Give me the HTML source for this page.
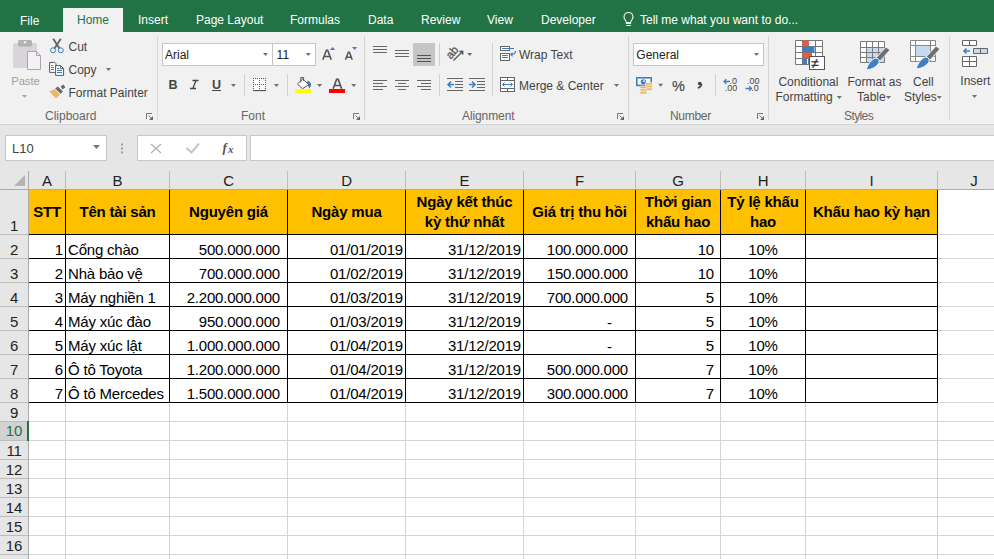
<!DOCTYPE html><html><head><meta charset="utf-8"><style>
*{margin:0;padding:0;box-sizing:border-box}
body{width:994px;height:559px;overflow:hidden;position:relative;background:#fff;font-family:"Liberation Sans",sans-serif}
.abs{position:absolute}
.t{position:absolute;white-space:nowrap;line-height:1}
.tab{position:absolute;top:14.8px;color:#fff;font-size:12px;line-height:12px;white-space:nowrap}
.rb{position:absolute;color:#444;font-size:12.5px;line-height:15px;white-space:nowrap}
.gl{position:absolute;top:110px;color:#666;font-size:12px;line-height:12px;white-space:nowrap}
.sep{position:absolute;width:1px;background:#d5d5d5}
.c{position:absolute;font-size:15px;letter-spacing:-0.2px;line-height:17px;white-space:nowrap;color:#000}
</style></head><body>

<div class="abs" style="left:0;top:0;width:994px;height:32px;background:#217346"></div>
<div class="abs" style="left:63px;top:8px;width:60px;height:24px;background:#f1f1f1"></div>
<div class="tab" style="left:20px;color:#fff;top:14.8px;">File</div>
<div class="tab" style="left:77px;color:#217346;top:13.9px;">Home</div>
<div class="tab" style="left:138px;color:#fff;top:13.9px;">Insert</div>
<div class="tab" style="left:196px;color:#fff;top:13.9px;">Page Layout</div>
<div class="tab" style="left:290px;color:#fff;top:13.9px;">Formulas</div>
<div class="tab" style="left:368px;color:#fff;top:13.9px;">Data</div>
<div class="tab" style="left:421px;color:#fff;top:13.9px;">Review</div>
<div class="tab" style="left:487px;color:#fff;top:13.9px;">View</div>
<div class="tab" style="left:541px;color:#fff;top:13.9px;">Developer</div>
<div class="tab" style="left:640px;color:#fff;top:13.9px;">Tell me what you want to do...</div>
<svg class="abs" style="left:0;top:0" width="994" height="32"><path d="M626.2,22.2 C626.2,20.3 624,19.5 624,16.9 A4.5,4.5 0 0 1 633,16.9 C633,19.5 630.8,20.3 630.8,22.2" fill="none" stroke="#fff" stroke-width="1.05"/><rect x="625.9" y="22" width="5.2" height="2" fill="#fff"/><rect x="626.3" y="25" width="4.4" height="1" fill="#fff"/></svg>
<div class="abs" style="left:0;top:32px;width:994px;height:92px;background:#f1f1f1"></div>
<div class="abs" style="left:0;top:124px;width:994px;height:1px;background:#d4d4d4"></div>
<div class="abs" style="left:0;top:125px;width:994px;height:65px;background:#e6e6e6"></div>
<div class="sep" style="left:157px;top:36px;height:84px"></div>
<div class="sep" style="left:364px;top:36px;height:84px"></div>
<div class="sep" style="left:628px;top:36px;height:84px"></div>
<div class="sep" style="left:768px;top:36px;height:84px"></div>
<div class="sep" style="left:949px;top:36px;height:84px"></div>
<div class="gl" style="left:45px;letter-spacing:0px">Clipboard</div>
<div class="gl" style="left:241px;letter-spacing:0px">Font</div>
<div class="gl" style="left:462px;letter-spacing:-0.1px">Alignment</div>
<div class="gl" style="left:670px;letter-spacing:-0.3px">Number</div>
<div class="gl" style="left:844px;letter-spacing:-0.6px">Styles</div>
<div class="rb" style="left:68.5px;top:40.8px;font-size:12px;line-height:12px;color:#444;">Cut</div>
<div class="rb" style="left:68.5px;top:64.2px;font-size:12px;line-height:12px;color:#444;">Copy</div>
<div class="rb" style="left:68.5px;top:87.0px;font-size:12px;line-height:12px;color:#444;">Format Painter</div>
<div class="rb" style="left:11.2px;top:75.5px;font-size:11.2px;line-height:11.2px;color:#a0a0a0;">Paste</div>
<div class="rb" style="left:519px;top:48.8px;font-size:12px;line-height:12px;color:#444;">Wrap Text</div>
<div class="rb" style="left:519px;top:80.2px;font-size:12px;line-height:12px;color:#444;">Merge &amp; Center</div>
<div class="rb" style="left:778.4px;top:75.8px;font-size:12px;line-height:12px;color:#444;">Conditional</div>
<div class="rb" style="left:775.4px;top:91.4px;font-size:12px;line-height:12px;color:#444;">Formatting</div>
<div class="rb" style="left:847.5px;top:75.8px;font-size:12px;line-height:12px;color:#444;">Format as</div>
<div class="rb" style="left:857px;top:91.4px;font-size:12px;line-height:12px;color:#444;">Table</div>
<div class="rb" style="left:913px;top:75.8px;font-size:12px;line-height:12px;color:#444;">Cell</div>
<div class="rb" style="left:904px;top:91.4px;font-size:12px;line-height:12px;color:#444;">Styles</div>
<div class="rb" style="left:960.3px;top:74.8px;font-size:12px;line-height:12px;color:#444;">Insert</div>
<div class="abs" style="left:162px;top:43px;width:111px;height:23px;background:#fff;border:1px solid #c6c6c6"></div>
<div class="abs" style="left:272px;top:43px;width:44px;height:23px;background:#fff;border:1px solid #c6c6c6"></div>
<div class="abs" style="left:633px;top:43px;width:131px;height:23px;background:#fff;border:1px solid #c6c6c6"></div>
<div class="abs" style="left:413px;top:43px;width:22px;height:23px;background:#c5c5c5"></div>
<div class="rb" style="left:165px;top:48.8px;font-size:12px;line-height:12px;color:#222;">Arial</div>
<div class="rb" style="left:276.6px;top:48.8px;font-size:12px;line-height:12px;color:#222;">11</div>
<div class="rb" style="left:636.3px;top:48.8px;font-size:12px;line-height:12px;color:#222;">General</div>
<svg class="abs" style="left:0;top:0" width="994" height="125"><rect x="13" y="43" width="24" height="25" rx="2" fill="#d9d4d9"/><rect x="18" y="40" width="14" height="6.5" rx="1.5" fill="#b4b1b4"/><circle cx="25" cy="42.2" r="1.2" fill="#f1f1f1"/><path d="M27.5,51.5 H36.5 L40.5,55.5 V69.5 H27.5 Z" fill="#f5f0f5" stroke="#a9a6a9" stroke-width="1"/><path d="M36.5,51.5 V55.5 H40.5" fill="none" stroke="#a9a6a9" stroke-width="1"/><polygon points="22.0,95.0 27.0,95.0 24.5,98.0" fill="#a6a6a6"/><path d="M53.2,38.8 L59.5,48.5 M60.8,38.8 L54.5,48.5" stroke="#666" stroke-width="1.9" fill="none"/><circle cx="53" cy="50.3" r="2.5" fill="none" stroke="#3f7fc1" stroke-width="1.0"/><circle cx="60.8" cy="50.3" r="2.5" fill="none" stroke="#3f7fc1" stroke-width="1.0"/><path d="M49.6,62.4 H54.6 L56,63.8 V72.4 H49.6 Z" fill="#fff" stroke="#5a5a5a"/><path d="M51,65.5 H53 M51,67.5 H54 M51,69.5 H54" stroke="#3f7fc1"/><path d="M55.6,65.6 H60.6 L63.6,68.6 V75.4 H55.6 Z" fill="#fff" stroke="#5a5a5a"/><path d="M60.6,65.6 V68.6 H63.6" fill="none" stroke="#5a5a5a"/><path d="M57,68.5 H59 M57,70.5 H62 M57,72.5 H62" stroke="#3f7fc1"/><polygon points="106.0,68.0 111.0,68.0 108.5,71.0" fill="#6f6f6f"/><path d="M49.2,91.4 L54.8,89 L60,94.6 L56,98.6 Z" fill="#e8b76e"/><path d="M55.2,88.4 L57.8,86.4 L63,91.6 L60.6,93.8 Z" fill="#6a6a6a"/><path d="M60.6,86.4 L63.4,84.6 L65.4,87.2 L62.6,89.6 Z" fill="#6a6a6a"/><path d="M146.5,119 V113.5 H152" fill="none" stroke="#777"/><path d="M148.5,115.5 L152,119" fill="none" stroke="#777"/><polygon points="153,116 153,120 149,120" fill="#666"/><path d="M353.5,119 V113.5 H359" fill="none" stroke="#777"/><path d="M355.5,115.5 L359,119" fill="none" stroke="#777"/><polygon points="360,116 360,120 356,120" fill="#666"/><path d="M617.5,119 V113.5 H623" fill="none" stroke="#777"/><path d="M619.5,115.5 L623,119" fill="none" stroke="#777"/><polygon points="624,116 624,120 620,120" fill="#666"/><path d="M757.5,119 V113.5 H763" fill="none" stroke="#777"/><path d="M759.5,115.5 L763,119" fill="none" stroke="#777"/><polygon points="764,116 764,120 760,120" fill="#666"/><polygon points="263.0,53.0 268.0,53.0 265.5,56.0" fill="#6f6f6f"/><polygon points="305.7,53.0 310.7,53.0 308.2,56.0" fill="#6f6f6f"/><path d="M322.8,59.7 L326.4,50.3 H327.7 L331.2,59.7 M324.3,56.5 H329.8" fill="none" stroke="#555" stroke-width="1.6"/><polygon points="330,50 335.2,50 332.6,47" fill="#3f7fc1"/><path d="M345.5,59.7 L348.3,52.2 H349.5 L352.2,59.7 M346.7,57.2 H351" fill="none" stroke="#555" stroke-width="1.5"/><polygon points="352,47 357.2,47 354.6,50" fill="#3f7fc1"/><text x="168.5" y="89" font-family="Liberation Sans" font-weight="bold" font-size="12.5" fill="#444">B</text><path d="M192.5,80.5 H198.5 M190,88.5 H196 M196,80.5 L192.8,88.5" stroke="#444" stroke-width="1.3" fill="none"/><text x="212" y="88.5" font-family="Liberation Sans" font-weight="bold" font-size="12.5" fill="#444">U</text><rect x="212" y="90" width="9" height="1" fill="#444"/><polygon points="230.9,84.0 235.9,84.0 233.4,87.0" fill="#6f6f6f"/><rect x="244" y="74" width="1" height="22" fill="#d0d0d0"/><rect x="253" y="78" width="13" height="12" fill="#fff"/><rect x="253" y="78" width="1" height="1" fill="#555"/><rect x="255" y="78" width="1" height="1" fill="#555"/><rect x="257" y="78" width="1" height="1" fill="#555"/><rect x="259" y="78" width="1" height="1" fill="#555"/><rect x="261" y="78" width="1" height="1" fill="#555"/><rect x="263" y="78" width="1" height="1" fill="#555"/><rect x="265" y="78" width="1" height="1" fill="#555"/><rect x="253" y="84" width="1" height="1" fill="#555"/><rect x="255" y="84" width="1" height="1" fill="#555"/><rect x="257" y="84" width="1" height="1" fill="#555"/><rect x="259" y="84" width="1" height="1" fill="#555"/><rect x="261" y="84" width="1" height="1" fill="#555"/><rect x="263" y="84" width="1" height="1" fill="#555"/><rect x="265" y="84" width="1" height="1" fill="#555"/><rect x="253" y="78" width="1" height="1" fill="#555"/><rect x="253" y="80" width="1" height="1" fill="#555"/><rect x="253" y="82" width="1" height="1" fill="#555"/><rect x="253" y="84" width="1" height="1" fill="#555"/><rect x="253" y="86" width="1" height="1" fill="#555"/><rect x="253" y="88" width="1" height="1" fill="#555"/><rect x="259" y="78" width="1" height="1" fill="#555"/><rect x="259" y="80" width="1" height="1" fill="#555"/><rect x="259" y="82" width="1" height="1" fill="#555"/><rect x="259" y="84" width="1" height="1" fill="#555"/><rect x="259" y="86" width="1" height="1" fill="#555"/><rect x="259" y="88" width="1" height="1" fill="#555"/><rect x="265" y="78" width="1" height="1" fill="#555"/><rect x="265" y="80" width="1" height="1" fill="#555"/><rect x="265" y="82" width="1" height="1" fill="#555"/><rect x="265" y="84" width="1" height="1" fill="#555"/><rect x="265" y="86" width="1" height="1" fill="#555"/><rect x="265" y="88" width="1" height="1" fill="#555"/><rect x="253" y="90" width="13" height="1.1" fill="#555"/><polygon points="273.9,84.0 278.9,84.0 276.4,87.0" fill="#6f6f6f"/><rect x="287" y="74" width="1" height="22" fill="#d0d0d0"/><path d="M307.5,80.5 Q311.8,82 311,86 L309.2,88.6 Q308.6,85.5 307,84.5 Z" fill="#3f7fc1"/><polygon points="297.5,84 302.7,79 308.8,84.5 302.5,88.8" fill="#fff" stroke="#555" stroke-width="1"/><path d="M300.8,82.5 V77.6 H303.6 V81" fill="none" stroke="#555" stroke-width="1"/><rect x="295" y="89" width="16" height="4" fill="#ffff00"/><polygon points="317.1,84.0 322.1,84.0 319.6,87.0" fill="#6f6f6f"/><path d="M333.2,88.8 L336.6,79.3 H338.2 L341.6,88.8 M334.6,85.5 H340.2" fill="none" stroke="#555" stroke-width="1.7"/><rect x="329" y="89" width="16" height="4" fill="#ff0000"/><polygon points="351.2,84.0 356.2,84.0 353.7,87.0" fill="#6f6f6f"/><rect x="373" y="46" width="14" height="1" fill="#666"/><rect x="373" y="49" width="14" height="1" fill="#666"/><rect x="373" y="52" width="14" height="1" fill="#666"/><rect x="395" y="50" width="14" height="1" fill="#666"/><rect x="395" y="53" width="14" height="1" fill="#666"/><rect x="395" y="56" width="14" height="1" fill="#666"/><rect x="417" y="55" width="14" height="1" fill="#555"/><rect x="417" y="58" width="14" height="1" fill="#555"/><rect x="417" y="61" width="14" height="1" fill="#555"/><rect x="439" y="43" width="1" height="23" fill="#d0d0d0"/><rect x="373" y="80" width="14" height="1" fill="#666"/><rect x="395.0" y="80" width="14.0" height="1" fill="#666"/><rect x="417" y="80" width="14" height="1" fill="#666"/><rect x="373" y="83" width="10" height="1" fill="#666"/><rect x="398.0" y="83" width="8.0" height="1" fill="#666"/><rect x="421" y="83" width="10" height="1" fill="#666"/><rect x="373" y="86" width="14" height="1" fill="#666"/><rect x="395.0" y="86" width="14.0" height="1" fill="#666"/><rect x="417" y="86" width="14" height="1" fill="#666"/><rect x="373" y="89" width="10" height="1" fill="#666"/><rect x="398.0" y="89" width="8.0" height="1" fill="#666"/><rect x="421" y="89" width="10" height="1" fill="#666"/><rect x="439" y="74" width="1" height="22" fill="#d0d0d0"/><text x="0" y="0" font-family="Liberation Sans" font-size="11.5" fill="#555" stroke="#555" stroke-width="0.3" transform="translate(451,59.8) rotate(-50)">ab</text><path d="M453.5,60.5 L461.5,52.5" fill="none" stroke="#555" stroke-width="1.3"/><polygon points="459.5,51 463,51 463,54.5" fill="#555" stroke="#555" stroke-width="0.8"/><polygon points="467.2,53.0 472.2,53.0 469.7,56.0" fill="#6f6f6f"/><rect x="447" y="78" width="16" height="1" fill="#666"/><rect x="447" y="90" width="16" height="1" fill="#666"/><rect x="455" y="81" width="8" height="1" fill="#666"/><rect x="455" y="84" width="8" height="1" fill="#666"/><rect x="455" y="87" width="8" height="1" fill="#666"/><path d="M454,84.5 H448 M451,81.5 L448,84.5 L451,87.5" stroke="#3f7fc1" stroke-width="1.6" fill="none"/><rect x="469" y="78" width="16" height="1" fill="#666"/><rect x="469" y="90" width="16" height="1" fill="#666"/><rect x="477" y="81" width="8" height="1" fill="#666"/><rect x="477" y="84" width="8" height="1" fill="#666"/><rect x="477" y="87" width="8" height="1" fill="#666"/><path d="M469,84.5 H475 M472,81.5 L475,84.5 L472,87.5" stroke="#3f7fc1" stroke-width="1.6" fill="none"/><rect x="492" y="43" width="1" height="53" fill="#d0d0d0"/><rect x="500.5" y="46.5" width="9" height="4" fill="#fff" stroke="#666"/><rect x="500.5" y="53.5" width="9" height="7" fill="#fff" stroke="#666"/><path d="M502,48.5 H514 M502,55.5 H508 M502,57.5 H508" stroke="#3f7fc1"/><path d="M515.5,51 Q515.5,54.5 511,54.5" fill="none" stroke="#3f7fc1" stroke-width="1.2"/><polygon points="510,54.5 512.5,52 512.5,57" fill="#3f7fc1"/><rect x="500.5" y="77.5" width="14" height="14" fill="#fff" stroke="#666"/><path d="M500.5,80.5 H514.5 M500.5,88.5 H514.5 M507.5,77.5 V80.5 M507.5,88.5 V91.5" stroke="#666"/><path d="M502.5,84.5 H512.5 M504.5,82.5 L502.5,84.5 L504.5,86.5 M510.5,82.5 L512.5,84.5 L510.5,86.5" stroke="#3f7fc1" fill="none"/><polygon points="614.0,84.0 619.0,84.0 616.5,87.0" fill="#6f6f6f"/><polygon points="754.0,53.0 759.0,53.0 756.5,56.0" fill="#6f6f6f"/><rect x="636" y="77" width="16" height="9.2" fill="#3f7fc1"/><rect x="637.6" y="78.6" width="12.8" height="6" fill="#fff"/><circle cx="643.4" cy="81.8" r="2.6" fill="#3f7fc1"/><circle cx="644" cy="81.2" r="0.9" fill="#fff"/><rect x="645.1999999999999" y="82.7" width="7.2" height="2.6" rx="1.3" fill="#e8b76e" stroke="#f1f1f1" stroke-width="0.7"/><rect x="645.1999999999999" y="85.3" width="7.2" height="2.6" rx="1.3" fill="#e8b76e" stroke="#f1f1f1" stroke-width="0.7"/><rect x="645.1999999999999" y="87.9" width="7.2" height="2.6" rx="1.3" fill="#e8b76e" stroke="#f1f1f1" stroke-width="0.7"/><rect x="639.8" y="86.10000000000001" width="7.2" height="2.6" rx="1.3" fill="#e8b76e" stroke="#f1f1f1" stroke-width="0.7"/><rect x="639.8" y="88.7" width="7.2" height="2.6" rx="1.3" fill="#e8b76e" stroke="#f1f1f1" stroke-width="0.7"/><rect x="639.8" y="91.3" width="7.2" height="2.6" rx="1.3" fill="#e8b76e" stroke="#f1f1f1" stroke-width="0.7"/><polygon points="658.1,83.7 663.1,83.7 660.6,86.7" fill="#6f6f6f"/><text x="672" y="91" font-family="Liberation Sans" font-size="14.5" fill="#444" stroke="#444" stroke-width="0.15">%</text><circle cx="699.8" cy="83.6" r="1.9" fill="#444"/><path d="M701.5,84 Q701.8,86.6 697.8,88" fill="none" stroke="#444" stroke-width="1.5"/><rect x="715" y="74" width="1" height="22" fill="#d0d0d0"/><text x="729.5" y="84" font-family="Liberation Sans" font-size="9" fill="#444">.0</text><text x="724.8" y="91" font-family="Liberation Sans" font-size="9" fill="#444">.00</text><path d="M730,81.5 H724 M726.3,79.2 L724,81.5 L726.3,83.8" stroke="#3f7fc1" stroke-width="1.3" fill="none"/><text x="747" y="84" font-family="Liberation Sans" font-size="9" fill="#444">.00</text><text x="751.3" y="91" font-family="Liberation Sans" font-size="9" fill="#444">.0</text><path d="M745.5,88.5 H751.5 M749.2,86.2 L751.5,88.5 L749.2,90.8" stroke="#3f7fc1" stroke-width="1.3" fill="none"/><rect x="795.5" y="40.5" width="27" height="24" fill="#fff"/><path d="M795.5,40.5 V64.5" stroke="#777"/><path d="M802.5,40.5 V64.5" stroke="#777"/><path d="M808.5,40.5 V64.5" stroke="#777"/><path d="M815.5,40.5 V64.5" stroke="#777"/><path d="M822.5,40.5 V64.5" stroke="#777"/><path d="M795.5,40.5 H822.5" stroke="#777"/><path d="M795.5,46.5 H822.5" stroke="#777"/><path d="M795.5,52.5 H822.5" stroke="#777"/><path d="M795.5,58.5 H822.5" stroke="#777"/><path d="M795.5,64.5 H822.5" stroke="#777"/><rect x="802.5" y="40.5" width="6.5" height="6" fill="#e0603c"/><rect x="802.5" y="46.5" width="12" height="6" fill="#3f7fc1"/><rect x="802.5" y="52.5" width="9.5" height="6" fill="#e0603c"/><rect x="802.5" y="58.5" width="4.5" height="6" fill="#3f7fc1"/><rect x="809.5" y="56.5" width="15" height="13" fill="#fff" stroke="#555"/><text x="811.3" y="67.5" font-family="Liberation Sans" font-size="13.5" fill="#333" stroke="#333" stroke-width="0.3">≠</text><rect x="860.5" y="41.5" width="24" height="21" fill="#fff"/><rect x="866.5" y="47" width="18" height="15.5" fill="#c5d9f1"/><rect x="866.5" y="47.5" width="18" height="15" fill="#c5d9f1"/><path d="M860.5,41.5 V62.5" stroke="#7a7a7a"/><path d="M866.5,41.5 V62.5" stroke="#7a7a7a"/><path d="M872.5,41.5 V62.5" stroke="#7a7a7a"/><path d="M878.5,41.5 V62.5" stroke="#7a7a7a"/><path d="M884.5,41.5 V62.5" stroke="#7a7a7a"/><path d="M860.5,41.5 H884.5" stroke="#7a7a7a"/><path d="M860.5,47.5 H884.5" stroke="#7a7a7a"/><path d="M860.5,52.5 H884.5" stroke="#7a7a7a"/><path d="M860.5,57.5 H884.5" stroke="#7a7a7a"/><path d="M860.5,62.5 H884.5" stroke="#7a7a7a"/><path d="M876,58 L886,47 L890,50 L880,61 Z" fill="#6f6f6f" stroke="#f1f1f1" stroke-width="1"/><path d="M866,70 Q869,61 875,58 Q880,58 879,63 Q875,69 866,70 Z" fill="#3f7fc1" stroke="#f1f1f1" stroke-width="1"/><rect x="910.5" y="40.5" width="25" height="21" fill="#fff"/><rect x="916" y="46" width="14" height="10" fill="#c5d9f1"/><path d="M910.5,40.5 H935.5 V61.5 H910.5 Z M910.5,45.5 H935.5 M910.5,56.5 H935.5 M915.5,40.5 V61.5 M930.5,40.5 V61.5" stroke="#888" fill="none"/><path d="M926,57 L936,46 L940,49 L930,60 Z" fill="#6f6f6f" stroke="#f1f1f1" stroke-width="1"/><path d="M916,69 Q919,60 925,57 Q930,57 929,62 Q925,68 916,69 Z" fill="#3f7fc1" stroke="#f1f1f1" stroke-width="1"/><polygon points="836.8,96.0 841.8,96.0 839.3,99.0" fill="#6f6f6f"/><polygon points="886.0,96.0 891.0,96.0 888.5,99.0" fill="#6f6f6f"/><polygon points="936.8,96.0 941.8,96.0 939.3,99.0" fill="#6f6f6f"/><path d="M962.5,40.5 H976.5 V45.5 H962.5 Z M969.5,40.5 V45.5" stroke="#666" fill="#fff"/><path d="M973.5,48.5 H987.5 V53.5 H973.5 Z" stroke="#666" fill="#c5d9f1"/><path d="M980.5,48.5 V53.5" stroke="#666"/><path d="M970,51 H964 M966.5,48.5 L964,51 L966.5,53.5" stroke="#3f7fc1" stroke-width="1.6" fill="none"/><path d="M962.5,56.5 H976.5 V66.5 H962.5 Z M969.5,56.5 V66.5 M962.5,61.5 H976.5" stroke="#666" fill="#fff"/><polygon points="972.0,95.0 977.0,95.0 974.5,98.0" fill="#6f6f6f"/></svg>
<div class="abs" style="left:5px;top:135px;width:102px;height:26px;background:#fff;border:1px solid #c6c6c6"></div>
<div class="t" style="left:12px;top:142px;font-size:13px;color:#444">L10</div>
<div class="abs" style="left:137px;top:135px;width:110px;height:26px;background:#fff;border:1px solid #c6c6c6"></div>
<div class="abs" style="left:250px;top:135px;width:760px;height:26px;background:#fff;border:1px solid #c6c6c6"></div>
<svg class="abs" style="left:0;top:125px;overflow:visible" width="260" height="40"><g transform="translate(0,-125)"><polygon points="93,145 100,145 96.5,149" fill="#777"/><rect x="121" y="143.5" width="2" height="2" fill="#a0a0a0"/><rect x="121" y="147.5" width="2" height="2" fill="#a0a0a0"/><rect x="121" y="151.5" width="2" height="2" fill="#a0a0a0"/><path d="M151,144 L161,153 M161,144 L151,153" stroke="#b0b0b0" stroke-width="1.3"/><path d="M186.5,148 L191.5,152.5 L199,143.5" stroke="#c6c6c6" stroke-width="2" fill="none"/><text x="222.5" y="152" font-family="Liberation Serif" font-style="italic" font-weight="bold" font-size="13" fill="#555">f</text><text x="228" y="152.5" font-family="Liberation Serif" font-style="italic" font-weight="bold" font-size="11" fill="#555">x</text></g></svg>
<div class="abs" style="left:29px;top:190px;width:965px;height:369px;background:#fff"></div>
<div class="abs" style="left:0;top:171px;width:994px;height:18px;background:#e6e6e6"></div>
<div class="abs" style="left:0;top:190px;width:28px;height:369px;background:#e6e6e6"></div>
<div class="abs" style="left:29px;top:234px;width:965px;height:1px;background:#d4d4d4"></div>
<div class="abs" style="left:0;top:234px;width:28px;height:1px;background:#bcbcbc"></div>
<div class="abs" style="left:29px;top:258px;width:965px;height:1px;background:#d4d4d4"></div>
<div class="abs" style="left:0;top:258px;width:28px;height:1px;background:#bcbcbc"></div>
<div class="abs" style="left:29px;top:282px;width:965px;height:1px;background:#d4d4d4"></div>
<div class="abs" style="left:0;top:282px;width:28px;height:1px;background:#bcbcbc"></div>
<div class="abs" style="left:29px;top:306px;width:965px;height:1px;background:#d4d4d4"></div>
<div class="abs" style="left:0;top:306px;width:28px;height:1px;background:#bcbcbc"></div>
<div class="abs" style="left:29px;top:330px;width:965px;height:1px;background:#d4d4d4"></div>
<div class="abs" style="left:0;top:330px;width:28px;height:1px;background:#bcbcbc"></div>
<div class="abs" style="left:29px;top:354px;width:965px;height:1px;background:#d4d4d4"></div>
<div class="abs" style="left:0;top:354px;width:28px;height:1px;background:#bcbcbc"></div>
<div class="abs" style="left:29px;top:378px;width:965px;height:1px;background:#d4d4d4"></div>
<div class="abs" style="left:0;top:378px;width:28px;height:1px;background:#bcbcbc"></div>
<div class="abs" style="left:29px;top:402px;width:965px;height:1px;background:#d4d4d4"></div>
<div class="abs" style="left:0;top:402px;width:28px;height:1px;background:#bcbcbc"></div>
<div class="abs" style="left:29px;top:421px;width:965px;height:1px;background:#d4d4d4"></div>
<div class="abs" style="left:0;top:421px;width:28px;height:1px;background:#bcbcbc"></div>
<div class="abs" style="left:29px;top:440px;width:965px;height:1px;background:#d4d4d4"></div>
<div class="abs" style="left:0;top:440px;width:28px;height:1px;background:#bcbcbc"></div>
<div class="abs" style="left:29px;top:459px;width:965px;height:1px;background:#d4d4d4"></div>
<div class="abs" style="left:0;top:459px;width:28px;height:1px;background:#bcbcbc"></div>
<div class="abs" style="left:29px;top:478px;width:965px;height:1px;background:#d4d4d4"></div>
<div class="abs" style="left:0;top:478px;width:28px;height:1px;background:#bcbcbc"></div>
<div class="abs" style="left:29px;top:497px;width:965px;height:1px;background:#d4d4d4"></div>
<div class="abs" style="left:0;top:497px;width:28px;height:1px;background:#bcbcbc"></div>
<div class="abs" style="left:29px;top:516px;width:965px;height:1px;background:#d4d4d4"></div>
<div class="abs" style="left:0;top:516px;width:28px;height:1px;background:#bcbcbc"></div>
<div class="abs" style="left:29px;top:535px;width:965px;height:1px;background:#d4d4d4"></div>
<div class="abs" style="left:0;top:535px;width:28px;height:1px;background:#bcbcbc"></div>
<div class="abs" style="left:29px;top:554px;width:965px;height:1px;background:#d4d4d4"></div>
<div class="abs" style="left:0;top:554px;width:28px;height:1px;background:#bcbcbc"></div>
<div class="abs" style="left:29px;top:573px;width:965px;height:1px;background:#d4d4d4"></div>
<div class="abs" style="left:0;top:573px;width:28px;height:1px;background:#bcbcbc"></div>
<div class="abs" style="left:65px;top:190px;width:1px;height:369px;background:#d4d4d4"></div>
<div class="abs" style="left:65px;top:171px;width:1px;height:18px;background:#bcbcbc"></div>
<div class="abs" style="left:169px;top:190px;width:1px;height:369px;background:#d4d4d4"></div>
<div class="abs" style="left:169px;top:171px;width:1px;height:18px;background:#bcbcbc"></div>
<div class="abs" style="left:287px;top:190px;width:1px;height:369px;background:#d4d4d4"></div>
<div class="abs" style="left:287px;top:171px;width:1px;height:18px;background:#bcbcbc"></div>
<div class="abs" style="left:405px;top:190px;width:1px;height:369px;background:#d4d4d4"></div>
<div class="abs" style="left:405px;top:171px;width:1px;height:18px;background:#bcbcbc"></div>
<div class="abs" style="left:523px;top:190px;width:1px;height:369px;background:#d4d4d4"></div>
<div class="abs" style="left:523px;top:171px;width:1px;height:18px;background:#bcbcbc"></div>
<div class="abs" style="left:635px;top:190px;width:1px;height:369px;background:#d4d4d4"></div>
<div class="abs" style="left:635px;top:171px;width:1px;height:18px;background:#bcbcbc"></div>
<div class="abs" style="left:720px;top:190px;width:1px;height:369px;background:#d4d4d4"></div>
<div class="abs" style="left:720px;top:171px;width:1px;height:18px;background:#bcbcbc"></div>
<div class="abs" style="left:805px;top:190px;width:1px;height:369px;background:#d4d4d4"></div>
<div class="abs" style="left:805px;top:171px;width:1px;height:18px;background:#bcbcbc"></div>
<div class="abs" style="left:937px;top:190px;width:1px;height:369px;background:#d4d4d4"></div>
<div class="abs" style="left:937px;top:171px;width:1px;height:18px;background:#bcbcbc"></div>
<div class="abs" style="left:0;top:189px;width:994px;height:1px;background:#ababab"></div>
<div class="abs" style="left:28px;top:171px;width:1px;height:388px;background:#ababab"></div>
<svg class="abs" style="left:0;top:171px" width="28" height="18"><polygon points="25,4 25,15 14,15" fill="#b4b4b4"/></svg>
<div class="c" style="left:29px;top:172px;width:36px;text-align:center;color:#222">A</div>
<div class="c" style="left:66px;top:172px;width:103px;text-align:center;color:#222">B</div>
<div class="c" style="left:170px;top:172px;width:117px;text-align:center;color:#222">C</div>
<div class="c" style="left:288px;top:172px;width:117px;text-align:center;color:#222">D</div>
<div class="c" style="left:406px;top:172px;width:117px;text-align:center;color:#222">E</div>
<div class="c" style="left:524px;top:172px;width:111px;text-align:center;color:#222">F</div>
<div class="c" style="left:636px;top:172px;width:84px;text-align:center;color:#222">G</div>
<div class="c" style="left:721px;top:172px;width:84px;text-align:center;color:#222">H</div>
<div class="c" style="left:806px;top:172px;width:131px;text-align:center;color:#222">I</div>
<div class="c" style="left:938px;top:172px;width:72px;text-align:center;color:#222">J</div>
<div class="c" style="left:0;top:216.5px;width:28px;text-align:center;color:#222">1</div>
<div class="c" style="left:0;top:240.5px;width:28px;text-align:center;color:#222">2</div>
<div class="c" style="left:0;top:264.5px;width:28px;text-align:center;color:#222">3</div>
<div class="c" style="left:0;top:288.5px;width:28px;text-align:center;color:#222">4</div>
<div class="c" style="left:0;top:312.5px;width:28px;text-align:center;color:#222">5</div>
<div class="c" style="left:0;top:336.5px;width:28px;text-align:center;color:#222">6</div>
<div class="c" style="left:0;top:360.5px;width:28px;text-align:center;color:#222">7</div>
<div class="c" style="left:0;top:384.5px;width:28px;text-align:center;color:#222">8</div>
<div class="c" style="left:0;top:403.5px;width:28px;text-align:center;color:#222">9</div>
<div class="c" style="left:0;top:422.5px;width:28px;text-align:center;color:#222">10</div>
<div class="c" style="left:0;top:441.5px;width:28px;text-align:center;color:#222">11</div>
<div class="c" style="left:0;top:460.5px;width:28px;text-align:center;color:#222">12</div>
<div class="c" style="left:0;top:479.5px;width:28px;text-align:center;color:#222">13</div>
<div class="c" style="left:0;top:498.5px;width:28px;text-align:center;color:#222">14</div>
<div class="c" style="left:0;top:517.5px;width:28px;text-align:center;color:#222">15</div>
<div class="c" style="left:0;top:536.5px;width:28px;text-align:center;color:#222">16</div>
<div class="c" style="left:0;top:555.5px;width:28px;text-align:center;color:#222">17</div>
<div class="abs" style="left:29px;top:190px;width:908px;height:44px;background:#ffc000"></div>
<div class="abs" style="left:29px;top:234px;width:909px;height:1px;background:#000"></div>
<div class="abs" style="left:29px;top:258px;width:909px;height:1px;background:#000"></div>
<div class="abs" style="left:29px;top:282px;width:909px;height:1px;background:#000"></div>
<div class="abs" style="left:29px;top:306px;width:909px;height:1px;background:#000"></div>
<div class="abs" style="left:29px;top:330px;width:909px;height:1px;background:#000"></div>
<div class="abs" style="left:29px;top:354px;width:909px;height:1px;background:#000"></div>
<div class="abs" style="left:29px;top:378px;width:909px;height:1px;background:#000"></div>
<div class="abs" style="left:29px;top:402px;width:909px;height:1px;background:#000"></div>
<div class="abs" style="left:65px;top:190px;width:1px;height:213px;background:#000"></div>
<div class="abs" style="left:169px;top:190px;width:1px;height:213px;background:#000"></div>
<div class="abs" style="left:287px;top:190px;width:1px;height:213px;background:#000"></div>
<div class="abs" style="left:405px;top:190px;width:1px;height:213px;background:#000"></div>
<div class="abs" style="left:523px;top:190px;width:1px;height:213px;background:#000"></div>
<div class="abs" style="left:635px;top:190px;width:1px;height:213px;background:#000"></div>
<div class="abs" style="left:720px;top:190px;width:1px;height:213px;background:#000"></div>
<div class="abs" style="left:805px;top:190px;width:1px;height:213px;background:#000"></div>
<div class="abs" style="left:937px;top:190px;width:1px;height:213px;background:#000"></div>
<div class="c" style="left:29px;top:203px;width:36px;text-align:center;font-weight:bold">STT</div>
<div class="c" style="left:66px;top:203px;width:103px;text-align:center;font-weight:bold">Tên tài sản</div>
<div class="c" style="left:170px;top:203px;width:117px;text-align:center;font-weight:bold">Nguyên giá</div>
<div class="c" style="left:288px;top:203px;width:117px;text-align:center;font-weight:bold">Ngày mua</div>
<div class="c" style="left:406px;top:192px;width:117px;text-align:center;font-weight:bold;line-height:19.7px">Ngày kết thúc<br>kỳ thứ nhất</div>
<div class="c" style="left:524px;top:203px;width:111px;text-align:center;font-weight:bold">Giá trị thu hồi</div>
<div class="c" style="left:636px;top:192px;width:84px;text-align:center;font-weight:bold;line-height:19.7px">Thời gian<br>khấu hao</div>
<div class="c" style="left:721px;top:192px;width:84px;text-align:center;font-weight:bold;line-height:19.7px">Tỷ lệ khấu<br>hao</div>
<div class="c" style="left:806px;top:203px;width:131px;text-align:center;font-weight:bold">Khấu hao kỳ hạn</div>
<div class="c" style="left:29px;top:241px;width:34px;text-align:right">1</div>
<div class="c" style="left:68px;top:241px">Cổng chào</div>
<div class="c" style="left:170px;top:241px;width:110px;text-align:right">500.000.000</div>
<div class="c" style="left:288px;top:241px;width:115px;text-align:right">01/01/2019</div>
<div class="c" style="left:406px;top:241px;width:115px;text-align:right">31/12/2019</div>
<div class="c" style="left:524px;top:241px;width:104px;text-align:right">100.000.000</div>
<div class="c" style="left:636px;top:241px;width:78px;text-align:right">10</div>
<div class="c" style="left:721px;top:241px;width:84px;text-align:center">10%</div>
<div class="c" style="left:29px;top:265px;width:34px;text-align:right">2</div>
<div class="c" style="left:68px;top:265px">Nhà bảo vệ</div>
<div class="c" style="left:170px;top:265px;width:110px;text-align:right">700.000.000</div>
<div class="c" style="left:288px;top:265px;width:115px;text-align:right">01/02/2019</div>
<div class="c" style="left:406px;top:265px;width:115px;text-align:right">31/12/2019</div>
<div class="c" style="left:524px;top:265px;width:104px;text-align:right">150.000.000</div>
<div class="c" style="left:636px;top:265px;width:78px;text-align:right">10</div>
<div class="c" style="left:721px;top:265px;width:84px;text-align:center">10%</div>
<div class="c" style="left:29px;top:289px;width:34px;text-align:right">3</div>
<div class="c" style="left:68px;top:289px">Máy nghiền 1</div>
<div class="c" style="left:170px;top:289px;width:110px;text-align:right">2.200.000.000</div>
<div class="c" style="left:288px;top:289px;width:115px;text-align:right">01/03/2019</div>
<div class="c" style="left:406px;top:289px;width:115px;text-align:right">31/12/2019</div>
<div class="c" style="left:524px;top:289px;width:104px;text-align:right">700.000.000</div>
<div class="c" style="left:636px;top:289px;width:78px;text-align:right">5</div>
<div class="c" style="left:721px;top:289px;width:84px;text-align:center">10%</div>
<div class="c" style="left:29px;top:313px;width:34px;text-align:right">4</div>
<div class="c" style="left:68px;top:313px">Máy xúc đào</div>
<div class="c" style="left:170px;top:313px;width:110px;text-align:right">950.000.000</div>
<div class="c" style="left:288px;top:313px;width:115px;text-align:right">01/03/2019</div>
<div class="c" style="left:406px;top:313px;width:115px;text-align:right">31/12/2019</div>
<div class="c" style="left:524px;top:313.8px;width:87.8px;text-align:right">-</div>
<div class="c" style="left:636px;top:313px;width:78px;text-align:right">5</div>
<div class="c" style="left:721px;top:313px;width:84px;text-align:center">10%</div>
<div class="c" style="left:29px;top:337px;width:34px;text-align:right">5</div>
<div class="c" style="left:68px;top:337px">Máy xúc lật</div>
<div class="c" style="left:170px;top:337px;width:110px;text-align:right">1.000.000.000</div>
<div class="c" style="left:288px;top:337px;width:115px;text-align:right">01/04/2019</div>
<div class="c" style="left:406px;top:337px;width:115px;text-align:right">31/12/2019</div>
<div class="c" style="left:524px;top:337.8px;width:87.8px;text-align:right">-</div>
<div class="c" style="left:636px;top:337px;width:78px;text-align:right">5</div>
<div class="c" style="left:721px;top:337px;width:84px;text-align:center">10%</div>
<div class="c" style="left:29px;top:361px;width:34px;text-align:right">6</div>
<div class="c" style="left:68px;top:361px">Ô tô Toyota</div>
<div class="c" style="left:170px;top:361px;width:110px;text-align:right">1.200.000.000</div>
<div class="c" style="left:288px;top:361px;width:115px;text-align:right">01/04/2019</div>
<div class="c" style="left:406px;top:361px;width:115px;text-align:right">31/12/2019</div>
<div class="c" style="left:524px;top:361px;width:104px;text-align:right">500.000.000</div>
<div class="c" style="left:636px;top:361px;width:78px;text-align:right">7</div>
<div class="c" style="left:721px;top:361px;width:84px;text-align:center">10%</div>
<div class="c" style="left:29px;top:385px;width:34px;text-align:right">7</div>
<div class="c" style="left:68px;top:385px">Ô tô Mercedes</div>
<div class="c" style="left:170px;top:385px;width:110px;text-align:right">1.500.000.000</div>
<div class="c" style="left:288px;top:385px;width:115px;text-align:right">01/04/2019</div>
<div class="c" style="left:406px;top:385px;width:115px;text-align:right">31/12/2019</div>
<div class="c" style="left:524px;top:385px;width:104px;text-align:right">300.000.000</div>
<div class="c" style="left:636px;top:385px;width:78px;text-align:right">7</div>
<div class="c" style="left:721px;top:385px;width:84px;text-align:center">10%</div>
<div class="abs" style="left:0;top:422px;width:28px;height:18px;background:#d2d2d2"></div>
<div class="c" style="left:0;top:422px;width:28px;text-align:center;color:#217346">10</div>
<div class="abs" style="left:27px;top:421px;width:2px;height:20px;background:#217346"></div>
</body></html>
